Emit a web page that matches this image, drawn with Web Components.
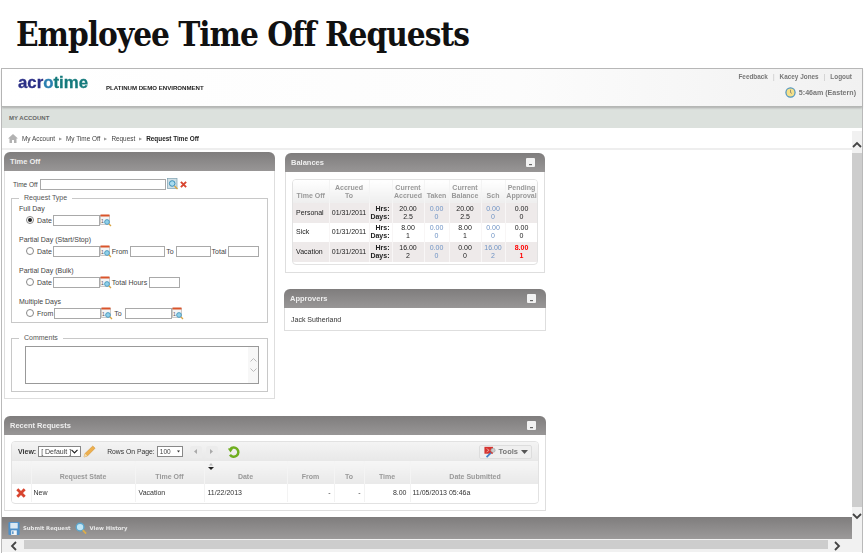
<!DOCTYPE html>
<html>
<head>
<meta charset="utf-8">
<title>Employee Time Off Requests</title>
<style>
  html, body { margin: 0; padding: 0; background: #fff; }
  body { width: 864px; height: 553px; overflow: hidden; font-family: "Liberation Sans", Arial, sans-serif; font-size: 7px; color: #333; }
</style>
</head>
<body>
<time-off-page></time-off-page>

<script>
// small svg icons, used by several elements
const ICONS = {
  calendar: `<svg width="12" height="13" viewBox="0 0 12 13"><rect x=".5" y="1.5" width="9" height="9" fill="#f4f4f4" stroke="#aaa" stroke-width=".6"/><rect x=".5" y=".5" width="9" height="2" fill="#d9542b"/><text x="1" y="9" font-size="5" font-family="Liberation Sans" fill="#555">1</text><circle cx="7" cy="8" r="2.4" fill="#8fd0ea" stroke="#3f8fb5" stroke-width=".8"/><path d="M9 10l2 2" stroke="#d9a441" stroke-width="1.3"/></svg>`,
  search: `<svg width="11" height="12" viewBox="0 0 11 12"><rect x=".5" y=".5" width="9.5" height="10" fill="#cfdfe6" stroke="#7da0b0" stroke-width=".7"/><circle cx="5.2" cy="5.5" r="2.8" fill="#a9dcef" stroke="#3a8fb8"/><path d="M7.500 8l3 3" stroke="#d9a441" stroke-width="1.4"/></svg>`,
  cross: `<svg width="7" height="7" viewBox="0 0 8 8"><path d="M1 1l6 6M7 1L1 7" stroke="#d8452f" stroke-width="2.2"/></svg>`,
  bigCross: `<svg width="10" height="10" viewBox="0 0 10 10"><path d="M1.300 1.300l7.400 7.400M8.700 1.300L1.300 8.700" stroke="#d8452f" stroke-width="2.800"/></svg>`,
  minimize: `<svg width="9" height="9" viewBox="0 0 9 9"><rect width="9" height="9" rx="1" fill="#f2f2f2"/><rect x="3" y="6" width="3" height="1.2" fill="#666"/></svg>`,
  home: `<svg width="10" height="9" viewBox="0 0 11 10"><path d="M5.500 0L0 5h1.600v5h2.800V6.600h2.200V10h2.800V5H11z" fill="#b2b2b2"/></svg>`,
  clock: `<svg width="11" height="11" viewBox="0 0 12 12"><circle cx="6" cy="6" r="5" fill="#f5e08a" stroke="#4d93bd" stroke-width="1.300"/><path d="M6 3v3l1.500 1" stroke="#666" stroke-width=".7" fill="none"/></svg>`,
  pencil: `<svg width="13" height="13" viewBox="0 0 13 13"><path d="M1 12l1-3.500L9.800 1l2.300 2.200L4.400 11z" fill="#eeb04e" stroke="#c98a2c" stroke-width=".5"/><path d="M1 12l1-3.500 2.400 2.500z" fill="#f3dcae"/></svg>`,
  refresh: `<svg width="14" height="14" viewBox="0 0 14 14"><path d="M3.200 4.200A4.600 4.600 0 1 1 3 9.800" fill="none" stroke="#6fae1f" stroke-width="2.500"/><path d="M.8 3.500h5.400L3.500 7.600z" fill="#6fae1f"/></svg>`,
  tools: `<svg width="12" height="12" viewBox="0 0 14 14"><rect x=".5" y="1" width="10" height="8" fill="#d5332f"/><path d="M3 3l3 2-3 2" stroke="#f6c7c5" fill="none" stroke-width=".8"/><circle cx="10.500" cy="5" r="2.500" fill="#ccc" stroke="#999" stroke-width=".6"/><path d="M3 13l5-5" stroke="#3f7fc8" stroke-width="2"/></svg>`,
  save: `<svg width="12" height="13" viewBox="0 0 12 14"><rect width="12" height="14" rx="1" fill="#4f90c8"/><rect x="2" y="1" width="8" height="6" fill="#dbe9f3"/><rect x="3" y="9" width="6" height="5" fill="#f2f5f7"/><rect x="4" y="10" width="1.500" height="3" fill="#4f90c8"/></svg>`,
  lens: `<svg width="12" height="13" viewBox="0 0 13 14"><circle cx="5.500" cy="5.500" r="4.200" fill="#bfe6f6" stroke="#5aa5cc" stroke-width="1.500"/><path d="M8.500 8.800l3.500 3.700" stroke="#dcae4a" stroke-width="2"/></svg>`
};

// grey rounded panel with a title bar
class PanelBox extends HTMLElement {
  constructor() {
    super();
    this.attachShadow({ mode: 'open' });
    this.shadowRoot.innerHTML = `
      <style>
        :host { display: block; box-sizing: border-box; }
        .head {
          height: 19px; box-sizing: border-box; display: flex; align-items: center; justify-content: space-between;
          padding: 0 10px 0 6px; border-radius: 6px 6px 0 0;
          background: linear-gradient(#7f7d7d, #989696);
          color: #eee; font: bold 7.500px "Liberation Sans", Arial, sans-serif;
        }
        .head svg { display: block; }
        .body { border: 1px solid #dedede; border-top: 0; background: #fff; box-sizing: border-box; }
      </style>
      <div class="head"><span>${this.getAttribute('heading')}</span>${this.hasAttribute('minimize') ? ICONS.minimize : ''}</div>
      <div class="body"><slot></slot></div>
    `;
  }
}

// text box plus optional calendar
class DateField extends HTMLElement {
  constructor() {
    super();
    this.attachShadow({ mode: 'open' });
    const w = this.getAttribute('width') || 47;
    this.shadowRoot.innerHTML = `
      <style>
        :host { display: inline-flex; align-items: center; height: 12px; }
        .box { display: block; box-sizing: border-box; height: 11px; width: ${w}px; border: 1px solid #a9a9a9; background: #fff; }
        svg { display: block; margin-top: 1px; }
      </style>
      <span class="box"></span>${this.hasAttribute('plain') ? '' : ICONS.calendar}
    `;
  }
}

class RadioMark extends HTMLElement {
  constructor() {
    super();
    this.attachShadow({ mode: 'open' });
    this.shadowRoot.innerHTML = `
      <style>
        :host { display: block; width: 8px; height: 8px; box-sizing: border-box; border: 1px solid #888; border-radius: 50%; background: #fff; }
        i { display: ${this.hasAttribute('checked') ? 'block' : 'none'}; width: 4px; height: 4px; margin: 1px; border-radius: 50%; background: #222; }
      </style><i></i>`;
  }
}

class AppHeader extends HTMLElement {
  constructor() {
    super();
    this.attachShadow({ mode: 'open' });
    this.shadowRoot.innerHTML = `
      <style>
        :host { display: block; font-family: "Liberation Sans", Arial, sans-serif; }
        .top {
          height: 37px; display: flex; justify-content: space-between; padding: 0 6px 0 16px;
          background: linear-gradient(90deg, #fff, #fcfcfc 60%, #f1f1f1);
          border-bottom: 1px solid #b5b7b5; box-shadow: 0 1px 2px #aaa; position: relative;
        }
        .left { display: flex; }
        .logo { font: bold 16.800px "Liberation Sans", Arial, sans-serif; -webkit-text-stroke: .3px currentColor; color: #2b2f86; line-height: 16px; margin-top: 6px; width: 88px; }
        .logo u { text-decoration: none; color: #2a7fb0; }
        .logo b { color: #157a7c; }
        .env { font-size: 6.100px; font-weight: bold; color: #222; margin-top: 15px; line-height: 8px; }
        .right { text-align: right; color: #777; font-size: 6.400px; font-weight: bold; }
        .links { margin-top: 4px; line-height: 8px; display: flex; gap: 5px; justify-content: flex-end; padding-right: 4px; }
        .links i { font-style: normal; font-weight: normal; color: #bbb; }
        .time { display: flex; align-items: center; justify-content: flex-end; gap: 3px; margin-top: 6px; font-size: 7.100px; }
        .time svg { display: block; }
        .sub { height: 21px; line-height: 23px; padding-left: 7px; background: #dce1dd; color: #666; font-size: 6px; font-weight: bold; }
      </style>
      <div class="top">
        <div class="left">
          <div class="logo">acr<u>o</u><b>time</b></div>
          <div class="env">PLATINUM DEMO ENVIRONMENT</div>
        </div>
        <div class="right">
          <div class="links"><span>Feedback</span><i>|</i><span>Kacey Jones</span><i>|</i><span>Logout</span></div>
          <div class="time">${ICONS.clock}<span>5:46am (Eastern)</span></div>
        </div>
      </div>
      <div class="sub">MY ACCOUNT</div>
    `;
  }
}

class BreadCrumb extends HTMLElement {
  constructor() {
    super();
    this.attachShadow({ mode: 'open' });
    this.shadowRoot.innerHTML = `
      <style>
        :host { display: flex; align-items: center; height: 22px; box-sizing: border-box; padding: 1px 0 0 6px; border-bottom: 2px solid #eee; color: #444; font: 6.400px "Liberation Sans", Arial, sans-serif; }
        svg { margin-right: 4px; display: block; }
        i { font-style: normal; color: #999; margin: 0 4px; font-size: 4px; }
        b { color: #222; }
      </style>
      ${ICONS.home}<span>My Account</span><i>&#9654;</i><span>My Time Off</span><i>&#9654;</i><span>Request</span><i>&#9654;</i><b>Request Time Off</b>
    `;
  }
}

class TimeOffForm extends HTMLElement {
  constructor() {
    super();
    this.attachShadow({ mode: 'open' });
    this.shadowRoot.innerHTML = `
      <style>
        :host { display: block; box-sizing: border-box; height: 227px; padding: 7px 6px 0 6px; color: #444; font: 7px "Liberation Sans", Arial, sans-serif; }
        .time { display: flex; align-items: center; height: 12px; margin-bottom: 4px; }
        .time .lab { width: 29px; padding-left: 2px; box-sizing: border-box; flex: none; white-space: nowrap; font-size: 6.500px; }
        .time svg { margin-left: 1px; }
        .time .cross { margin-left: 1px; }
        svg { display: block; }
        fieldset { margin: 0; padding: 0 0 0 7px; border: 1px solid #c8c8c8; box-sizing: border-box; }
        legend { padding: 0 5px; margin-left: 0; line-height: 8px; color: #555; }
        .req { height: 129px; }
        .cap { line-height: 8px; margin-top: 10px; }
        .cap.first { margin-top: 3px; }
        .row { display: flex; align-items: center; height: 12px; margin: 1px 0 0 7px; }
        .row radio-mark { margin-right: 3px; }
        .row span { margin-right: 2px; }
        .row span.tight { margin-right: 1px; }
        .com { height: 58px; margin-top: 11px; padding: 0 0 0 13px; }
        .com legend { margin-left: -6px; }
        .area { width: 234px; height: 38px; margin-top: 4px; box-sizing: border-box; border: 1px solid #999; background: #fff; display: flex; justify-content: flex-end; }
        .bar { width: 10px; background: #f7f7f7; display: flex; flex-direction: column; align-items: center; justify-content: center; gap: 6px; }
      </style>
      <div class="time"><span class="lab">Time Off</span><date-field plain width="126"></date-field>${ICONS.search}<span class="cross">${ICONS.cross}</span></div>
      <fieldset class="req">
        <legend>Request Type</legend>
        <div class="cap first">Full Day</div>
        <div class="row"><radio-mark checked></radio-mark><span class="tight">Date</span><date-field></date-field></div>
        <div class="cap">Partial Day (Start/Stop)</div>
        <div class="row"><radio-mark></radio-mark><span class="tight">Date</span><date-field></date-field>
          <span>From</span><date-field plain width="35"></date-field>
          <span style="margin-left:1px">To</span><date-field plain width="35"></date-field>
          <span style="margin-left:1px">Total</span><date-field plain width="31"></date-field></div>
        <div class="cap">Partial Day (Bulk)</div>
        <div class="row"><radio-mark></radio-mark><span class="tight">Date</span><date-field></date-field>
          <span>Total Hours</span><date-field plain width="31"></date-field></div>
        <div class="cap">Multiple Days</div>
        <div class="row"><radio-mark></radio-mark><span class="tight">From</span><date-field></date-field>
          <span style="margin-left:1px;margin-right:3px">To</span><date-field></date-field></div>
      </fieldset>
      <fieldset class="com">
        <legend>Comments</legend>
        <div class="area"><div class="bar">
          <svg width="7" height="4" viewBox="0 0 7 4"><path d="M.5 3.500l3-3 3 3" fill="none" stroke="#bbb"/></svg>
          <svg width="7" height="4" viewBox="0 0 7 4"><path d="M.5 .5l3 3 3-3" fill="none" stroke="#bbb"/></svg>
        </div></div>
      </fieldset>
    `;
  }
}

class BalancesTable extends HTMLElement {
  constructor() {
    super();
    this.attachShadow({ mode: 'open' });
    const rows = [
      ['Personal', '20.00', '2.5', '0.00', '0', '20.00', '2.5', '0.00', '0', '0.00', '0', ''],
      ['Sick', '8.00', '1', '0.00', '0', '8.00', '1', '0.00', '0', '0.00', '0', ''],
      ['Vacation', '16.00', '2', '0.00', '0', '0.00', '0', '16.00', '2', '8.00', '1', 'red']
    ];
    const body = rows.map((r) => `<tr>
      <td class="l">${r[0]}</td><td>01/31/2011</td>
      <td class="hd"><b>Hrs:<br>Days:</b></td>
      <td>${r[1]}<br>${r[2]}</td><td class="blue">${r[3]}<br>${r[4]}</td>
      <td>${r[5]}<br>${r[6]}</td><td class="blue">${r[7]}<br>${r[8]}</td>
      <td class="${r[11]}">${r[9]}<br>${r[10]}</td></tr>`).join('');
    this.shadowRoot.innerHTML = `
      <style>
        :host { display: block; box-sizing: border-box; height: 100px; padding: 7px 6px 0 6px; font: 7px/8px "Liberation Sans", Arial, sans-serif; color: #222; }
        .wrap { border: 1px solid #e2e2e2; border-radius: 4px; height: 86px; box-sizing: border-box; overflow: hidden; }
        table { border-collapse: collapse; table-layout: fixed; width: 245px; }
        th { height: 23px; padding: 0 0 3px; box-sizing: border-box; vertical-align: bottom; color: #999; font-weight: bold; text-align: center; background: linear-gradient(#fff, #eee); border-right: 1px solid #f4f4f4; }
        td { height: 19.500px; padding: 0; text-align: center; border-right: 1px solid #f8f6f6; }
        tr:nth-child(odd) td { background: #eeeaea; }
        td.l { text-align: left; padding-left: 3px; }
        td.hd { text-align: right; padding-right: 2px; }
        td.blue { color: #6f93c4; }
        td.red { color: #ff0000; font-weight: bold; }
      </style>
      <div class="wrap"><table>
        <colgroup><col style="width:36px"><col style="width:40px"><col style="width:23px"><col style="width:32px"><col style="width:25px"><col style="width:32px"><col style="width:24px"><col style="width:33px"></colgroup>
        <thead><tr><th>Time Off</th><th>Accrued<br>To</th><th></th><th>Current<br>Accrued</th><th>Taken</th><th>Current<br>Balance</th><th>Sch</th><th>Pending<br>Approval</th></tr></thead>
        <tbody>${body}</tbody>
      </table></div>
    `;
  }
}

class RecentGrid extends HTMLElement {
  constructor() {
    super();
    this.attachShadow({ mode: 'open' });
    this.shadowRoot.innerHTML = `
      <style>
        :host { display: block; box-sizing: border-box; height: 75px; padding: 6px 6px 0 6px; font: 7px/8px "Liberation Sans", Arial, sans-serif; color: #333; }
        .wrap { border: 1px solid #e2e2e2; border-radius: 4px; overflow: hidden; height: 63px; box-sizing: border-box; }
        .bar { height: 19px; display: flex; align-items: center; padding: 0 6px 0 6px; background: linear-gradient(#f4f4f4, #e8e8e8); }
        .sel { box-sizing: border-box; height: 11px; width: 43px; margin: 0 2px 0 2px; border: 1px solid #888; background: #fff; color: #444; display: flex; align-items: center; justify-content: space-between; padding: 0 2px 0 2px; line-height: 8px; }
        .sel.sm { width: 26px; margin-left: 2px; font-size: 6.500px; }
        .sel svg { display: block; }
        .rows { margin-left: 11px; font-size: 6.800px; }
        .nav { display: flex; gap: 4px; margin-left: 5px; }
        .nav i { width: 12px; height: 12px; background: #ececec; border-radius: 2px; display: flex; align-items: center; justify-content: center; }
        .refresh { margin-left: 9px; display: block; height: 14px; }
        .tools { margin-left: auto; height: 14px; box-sizing: border-box; border: 1px solid #ddd; border-radius: 2px; background: #efefef; display: flex; align-items: center; gap: 3px; padding: 0 3px 0 4px; font-weight: bold; color: #777; font-size: 7.500px; }
        .tools svg { display: block; }
        table { border-collapse: collapse; table-layout: fixed; width: 528px; }
        th { height: 23px; padding: 0 0 3px; box-sizing: border-box; vertical-align: bottom; font-weight: bold; color: #999; text-align: center; background: linear-gradient(#f6f6f6, #e9e9e9); border-right: 1px solid #f4f4f4; position: relative; }
        td { height: 18px; padding: 0 3px; border-right: 1px solid #f3f3f3; background: #fff; }
        td svg { display: block; margin: 0 auto; }
        td.x { padding: 0; }
        td.s { padding-left: 2px; }
        td.r { text-align: right; }
        .sort { position: absolute; left: 3px; top: 2px; display: block; }
      </style>
      <div class="wrap">
        <div class="bar">
          <b>View:</b>
          <div class="sel"><span>[ Default ]</span><svg width="7" height="5" viewBox="0 0 7 5"><path d="M.5 .8l3 3 3-3" fill="none" stroke="#222" stroke-width="1.200"/></svg></div>
          ${ICONS.pencil}
          <span class="rows">Rows On Page:</span>
          <div class="sel sm"><span>100</span><svg width="3" height="3" viewBox="0 0 3 3"><path d="M0 .5h3L1.500 2.500z" fill="#333"/></svg></div>
          <div class="nav">
            <i><svg width="3" height="5" viewBox="0 0 3 5"><path d="M3 0v5L0 2.500z" fill="#aaa"/></svg></i>
            <i><svg width="3" height="5" viewBox="0 0 3 5"><path d="M0 0v5l3-2.500z" fill="#aaa"/></svg></i>
          </div>
          <span class="refresh">${ICONS.refresh}</span>
          <div class="tools">${ICONS.tools}<span>Tools</span><svg width="7" height="4" viewBox="0 0 7 4"><path d="M0 0h7L3.500 4z" fill="#555"/></svg></div>
        </div>
        <table>
          <colgroup><col style="width:19px"><col style="width:104px"><col style="width:69px"><col style="width:83px"><col style="width:47px"><col style="width:30px"><col style="width:46px"><col style="width:130px"></colgroup>
          <thead><tr><th></th><th>Request State</th><th>Time Off</th><th><svg class="sort" width="6" height="7" viewBox="0 0 6 7"><path d="M3 0l2 2.500H1z" fill="#bbb"/><path d="M0 4h6L3 7z" fill="#222"/></svg>Date</th><th>From</th><th>To</th><th>Time</th><th>Date Submitted</th></tr></thead>
          <tbody><tr><td class="x">${ICONS.bigCross}</td><td class="s">New</td><td>Vacation</td><td>11/22/2013</td><td class="r">-</td><td class="r">-</td><td class="r">8.00</td><td class="s">11/05/2013 05:46a</td></tr></tbody>
        </table>
      </div>
    `;
  }
}

class ActionBar extends HTMLElement {
  constructor() {
    super();
    this.attachShadow({ mode: 'open' });
    this.shadowRoot.innerHTML = `
      <style>
        :host { display: flex; align-items: center; height: 22px; padding-left: 6px; background: linear-gradient(#7f7d7d, #9c9a9a); color: #e8e8e8; font: bold 5.300px "DejaVu Sans", sans-serif; }
        svg { display: block; margin-right: 3px; }
        span { margin-right: 4px; }
      </style>
      ${ICONS.save}<span>Submit Request</span>${ICONS.lens}<span>View History</span>
    `;
  }
}

// fake browser scrollbars of the captured window
class ScrollBar extends HTMLElement {
  constructor() {
    super();
    this.attachShadow({ mode: 'open' });
    const vertical = this.getAttribute('dir') === 'v';
    const a = vertical ? 'M1 6l4-4 4 4' : 'M6 1L2 5l4 4';
    const b = vertical ? 'M1 2l4 4 4-4' : 'M4 1l4 4-4 4';
    const size = vertical ? 'width="10" height="8" viewBox="0 0 10 8"' : 'width="10" height="10" viewBox="0 0 10 10"';
    this.shadowRoot.innerHTML = `
      <style>
        :host { display: flex; background: #f1f1f1; flex-direction: ${vertical ? 'column' : 'row'}; box-sizing: border-box; ${vertical ? '' : 'padding-right: 10px;'} }
        .btn { flex: none; display: flex; align-items: center; justify-content: center; box-sizing: border-box; ${vertical ? 'height: 22px; padding-top: 6px;' : 'width: 22px; padding-left: 4px;'} }
        .btn.end { ${vertical ? 'height: 32px; padding: 0 0 14px;' : 'width: 24px; padding: 0 8px 0 0;'} }
        .thumb { flex: 1; background: #cdcdcd; ${vertical ? '' : 'margin: 1px 0 3px;'} }
        svg { display: block; }
      </style>
      <div class="btn"><svg ${size}><path d="${a}" fill="none" stroke="#444" stroke-width="1.800"/></svg></div>
      <div class="thumb"></div>
      <div class="btn end"><svg ${size}><path d="${b}" fill="none" stroke="#444" stroke-width="1.800"/></svg></div>
    `;
  }
}

class TimeOffPage extends HTMLElement {
  constructor() {
    super();
    this.attachShadow({ mode: 'open' });
    this.shadowRoot.innerHTML = `
      <style>
        :host { display: block; width: 864px; height: 553px; overflow: hidden; }
        h1 { margin: 0; height: 68px; box-sizing: border-box; padding: 13px 0 0 16px; font: bold 33px/44px "DejaVu Serif Condensed", "DejaVu Serif", serif; letter-spacing: -1px; color: #111; white-space: nowrap; }
        .frame { margin-left: 1px; width: 862px; border: 1px solid #b9b9b9; border-bottom: 0; box-sizing: border-box; height: 485px; display: flex; flex-direction: column; filter: blur(.25px); }
        .main { display: flex; height: 411px; }
        .col { width: 850px; flex: none; display: flex; flex-direction: column; }
        .canvas { height: 367px; padding: 2px 0 0 2px; box-sizing: border-box; }
        .top { display: flex; align-items: flex-start; }
        .left { width: 271px; flex: none; }
        .side { width: 262px; flex: none; margin-left: 9px; }
        .recent { width: 542px; margin-top: 17px; }
        .balances { margin: 1px 1px 0 1px; }
        .approvers { margin-top: 16px; }
        .who { height: 22px; padding-left: 6px; font: 7px/24px "Liberation Sans", Arial, sans-serif; color: #333; }
        scroll-bar[dir=v] { width: 11px; margin-top: 3px; }
        scroll-bar[dir=h] { height: 13px; flex: none; }
      </style>
      <h1>Employee Time Off Requests</h1>
      <div class="frame">
        <app-header></app-header>
        <div class="main">
          <div class="col">
            <bread-crumb></bread-crumb>
            <div class="canvas">
              <div class="top">
                <panel-box class="left" heading="Time Off"><time-off-form></time-off-form></panel-box>
                <div class="side">
                  <panel-box class="balances" heading="Balances" minimize><balances-table></balances-table></panel-box>
                  <panel-box class="approvers" heading="Approvers" minimize><div class="who">Jack Sutherland</div></panel-box>
                </div>
              </div>
              <panel-box class="recent" heading="Recent Requests" minimize><recent-grid></recent-grid></panel-box>
            </div>
            <action-bar></action-bar>
          </div>
          <scroll-bar dir="v"></scroll-bar>
        </div>
        <scroll-bar dir="h"></scroll-bar>
      </div>
    `;
  }
}

customElements.define('panel-box', PanelBox);
customElements.define('date-field', DateField);
customElements.define('radio-mark', RadioMark);
customElements.define('app-header', AppHeader);
customElements.define('bread-crumb', BreadCrumb);
customElements.define('time-off-form', TimeOffForm);
customElements.define('balances-table', BalancesTable);
customElements.define('recent-grid', RecentGrid);
customElements.define('action-bar', ActionBar);
customElements.define('scroll-bar', ScrollBar);
customElements.define('time-off-page', TimeOffPage);
</script>
</body>
</html>
